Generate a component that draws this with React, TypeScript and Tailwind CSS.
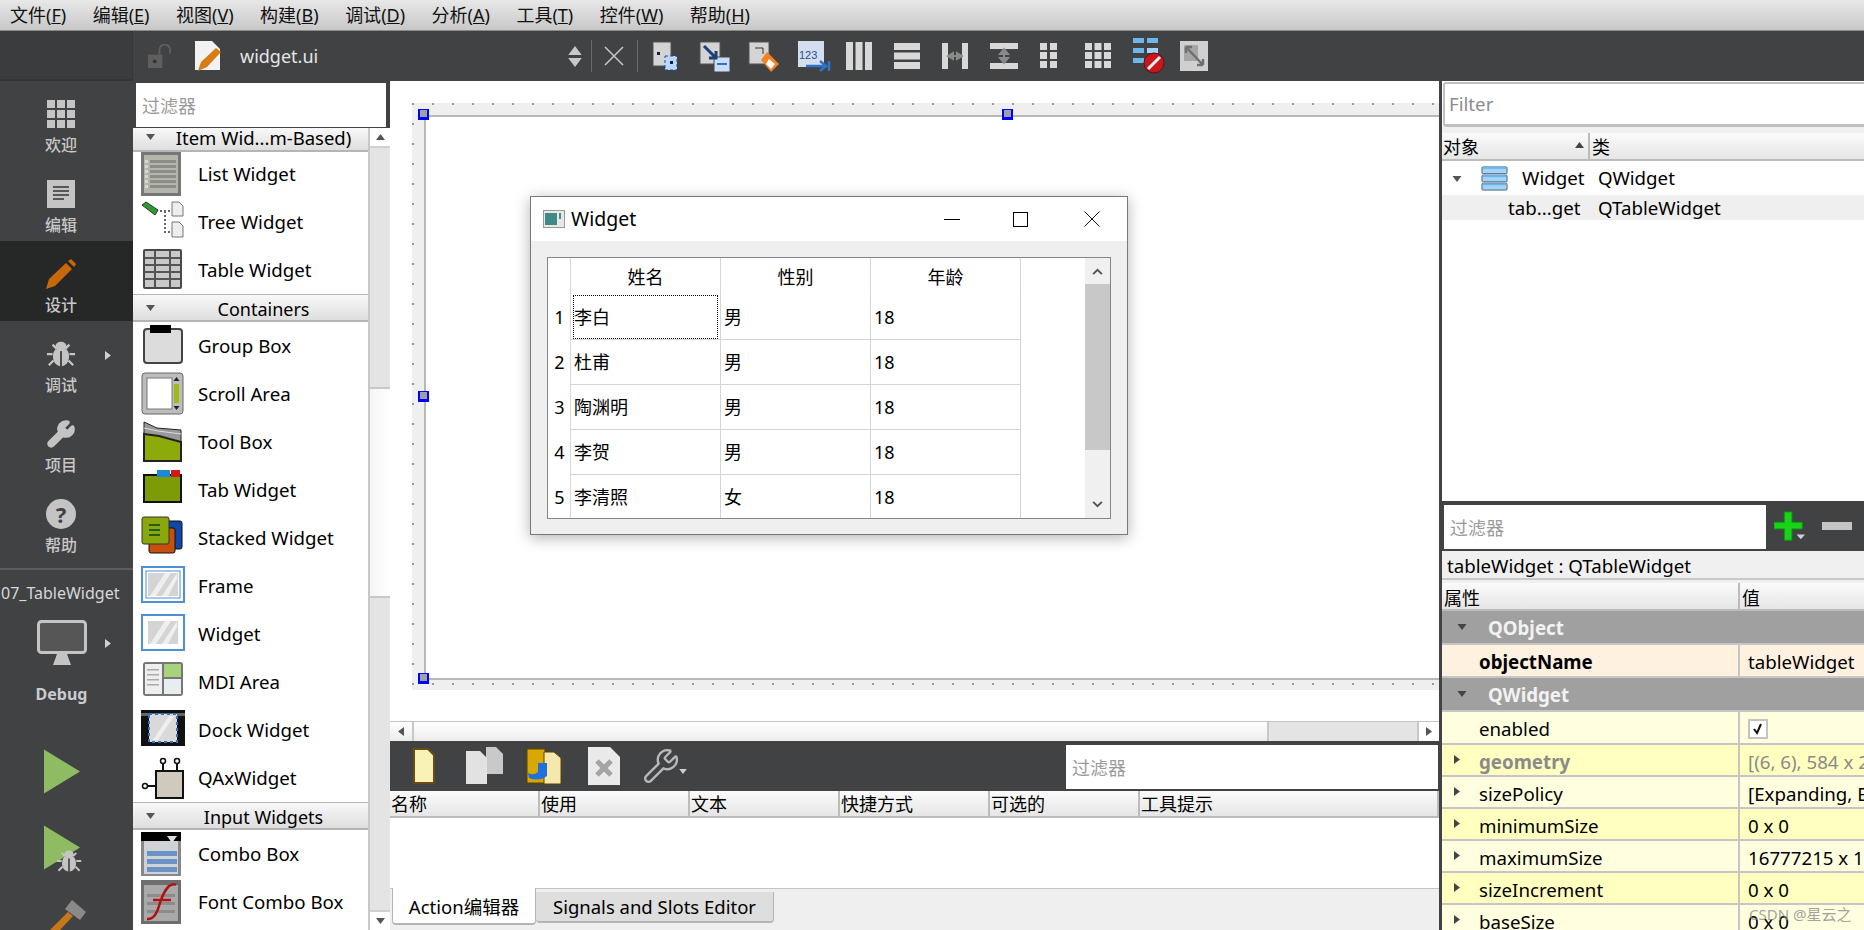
import React from 'react';
import { Wrench } from 'lucide-react';

// ---- little drawn icons ----

const Tri = ({ dir, className }: { dir: 'up' | 'down' | 'left' | 'right'; className?: string }) => {
  const pts = { up: '0,8 6,0 12,8', down: '0,0 12,0 6,8', left: '8,0 8,12 0,6', right: '0,0 8,6 0,12' }[dir];
  const box = dir === 'up' || dir === 'down' ? '0 0 12 8' : '0 0 8 12';
  return (
    <svg viewBox={box} className={className}>
      <polygon points={pts} fill="currentColor" />
    </svg>
  );
};

const Bug = ({ className }: { className?: string }) => (
  <svg viewBox="0 0 32 32" className={className}>
    <g stroke="#c4c4c4" strokeWidth="2.4" fill="none">
      <path d="M7 6l4 4M25 6l-4 4M1 16h6M31 16h-6M3 28l5-5M29 28l-5-5" />
    </g>
    <ellipse cx="16" cy="8" rx="6" ry="5" fill="#c4c4c4" />
    <path d="M15 11H10Q6 16 8 23Q10 28 15 29ZM17 11H22Q26 16 24 23Q22 28 17 29Z" fill="#c4c4c4" />
  </svg>
);

const Play = ({ className }: { className?: string }) => (
  <svg viewBox="0 0 36 44" className={className}>
    <polygon points="0,0 36,22 0,44" fill="#8fbc62" />
  </svg>
);

const ToolIcon = ({ kind }: { kind: number }) => {
  const c = '#d8d8d8';
  switch (kind) {
    case 0:
      return (
        <svg viewBox="0 0 36 32" className="w-[36px] h-[32px] blur-[0.4px]">
          <path d="M4 2h18v24H4z" fill="#d4d4d4" stroke="#555" />
          <path d="M16 16h12v14H16z" fill="#b9d7ff" stroke="#1f4e94" strokeDasharray="3 2" />
          <rect x="21" y="21" width="3" height="3" fill="#123" />
          <rect x="8" y="12" width="3" height="3" fill="#123" />
        </svg>
      );
    case 1:
      return (
        <svg viewBox="0 0 36 32" className="w-[36px] h-[32px] blur-[0.4px]">
          <path d="M2 2h20v22H2z" fill="#d4d4d4" stroke="#555" />
          <path d="M16 17h16v15H16z" fill="#c9deff" stroke="#444" />
          <path d="M19 24h10" stroke="#3b6fb4" strokeWidth="2" />
          <path d="M6 6l12 12M18 11v7h-7" stroke="#1d3f78" strokeWidth="3" fill="none" />
        </svg>
      );
    case 2:
      return (
        <svg viewBox="0 0 36 32" className="w-[36px] h-[32px] blur-[0.4px]">
          <path d="M2 2h20v22H2z" fill="#d4d4d4" stroke="#555" />
          <path d="M20 12l12 12-8 8-10-12z" fill="#f58220" />
          <path d="M22 19l6 5-4 5-5-5z" fill="#fff" />
          <path d="M8 8h8v6" stroke="#333" fill="none" />
        </svg>
      );
    case 3:
      return (
        <svg viewBox="0 0 36 32" className="w-[36px] h-[32px]">
          <path d="M2 1h26v26H2z" fill="#d4deef" />
          <text x="3" y="19" fontSize="11" fill="#24508f" fontFamily="Liberation Sans">123</text>
          <path d="M10 26h18M24 21l6 5-6 5M33 21v10" stroke="#2f73c9" strokeWidth="2.5" fill="none" />
        </svg>
      );
    case 4:
      return (
        <svg viewBox="0 0 28 32" className="w-[28px] h-[32px] blur-[0.4px]" fill={c}>
          <rect x="1" y="2" width="7" height="28" /><rect x="10.5" y="2" width="7" height="28" /><rect x="20" y="2" width="7" height="28" />
        </svg>
      );
    case 5:
      return (
        <svg viewBox="0 0 28 32" className="w-[28px] h-[32px] blur-[0.4px]" fill={c}>
          <rect x="1" y="3" width="26" height="7" /><rect x="1" y="12.5" width="26" height="7" /><rect x="1" y="22" width="26" height="7" />
        </svg>
      );
    case 6:
      return (
        <svg viewBox="0 0 28 32" className="w-[28px] h-[32px] blur-[0.4px]">
          <path d="M1 3h6v26H1zM21 3h6v26h-6z" fill={c} />
          <path d="M7 16h14M7 16l5-3v6zM21 16l-5-3v6z" stroke="#8a8a8a" strokeWidth="2" fill="#8a8a8a" />
        </svg>
      );
    case 7:
      return (
        <svg viewBox="0 0 30 32" className="w-[30px] h-[32px] blur-[0.4px]">
          <path d="M1 3h28v6H1zM1 23h28v6H1z" fill={c} />
          <path d="M15 9v14M15 9l-4 5h8zM15 23l-4-5h8z" stroke="#8a8a8a" strokeWidth="2" fill="#8a8a8a" />
        </svg>
      );
    case 8:
      return (
        <svg viewBox="0 0 20 32" className="w-[20px] h-[32px] blur-[0.4px]" fill={c}>
          {[3, 12, 21].map((y) => (
            <g key={y}><rect x="1" y={y} width="7" height="7" /><rect x="11" y={y} width="7" height="7" /></g>
          ))}
        </svg>
      );
    case 9:
      return (
        <svg viewBox="0 0 28 32" className="w-[28px] h-[32px] blur-[0.4px]" fill={c}>
          {[3, 12, 21].map((y) => (
            <g key={y}><rect x="1" y={y} width="7" height="7" /><rect x="10.5" y={y} width="7" height="7" /><rect x="20" y={y} width="7" height="7" /></g>
          ))}
        </svg>
      );
    case 10:
      return (
        <svg viewBox="0 0 34 38" className="w-[34px] h-[38px] blur-[0.4px]">
          <rect x="1" y="1" width="11" height="5" fill="#6fb6ee" /><rect x="15" y="1" width="11" height="5" fill="#6fb6ee" />
          <rect x="1" y="11" width="11" height="5" fill="#6fb6ee" /><rect x="15" y="11" width="11" height="5" fill="#a5d2f4" />
          <rect x="1" y="21" width="11" height="5" fill="#6fb6ee" />
          <circle cx="22" cy="26" r="10" fill="#c8161d" stroke="#6b0c10" />
          <path d="M16 32l12-12" stroke="#eee" strokeWidth="3" />
        </svg>
      );
    default:
      return (
        <svg viewBox="0 0 30 32" className="w-[30px] h-[32px] blur-[0.4px]">
          <rect x="1" y="1" width="28" height="30" fill="#d0d0d0" />
          <path d="M5 5h14v16H5z" fill="#a6a6a6" />
          <path d="M7 7l17 18M7 7v6M7 7h6M24 25v-6M24 25h-6" stroke="#707070" strokeWidth="2.5" fill="none" />
        </svg>
      );
  }
};

const BoxIcon = ({ name }: { name: string }) => {
  const cls = 'w-[44px] h-[44px] shrink-0 blur-[0.5px]';
  switch (name) {
    case 'List Widget':
      return (
        <svg viewBox="0 0 44 44" className={cls}>
          <rect x="0" y="0" width="40" height="44" fill="#777" />
          <rect x="3" y="3" width="34" height="38" fill="#b5b5ae" />
          {[8, 13, 18, 23, 28, 33].map((y) => <rect key={y} x="9" y={y} width="26" height="3" fill="#8d8d87" />)}
          {[8, 13, 18, 23, 28, 33].map((y) => <rect key={y} x="4" y={y} width="3" height="3" fill="#d8d8d2" />)}
        </svg>
      );
    case 'Tree Widget':
      return (
        <svg viewBox="0 0 44 44" className={cls}>
          <path d="M1 5l4-3 12 8-3 5z" fill="#2f9a2c" stroke="#333" />
          <path d="M19 11h10M24 11v21h6" stroke="#666" strokeWidth="2" strokeDasharray="2 2" fill="none" />
          <path d="M31 2h7l4 4v10H31zM31 22h7l4 4v11H31z" fill="#eee" stroke="#777" />
        </svg>
      );
    case 'Table Widget':
      return (
        <svg viewBox="0 0 44 44" className={cls}>
          <rect x="2" y="1" width="39" height="40" rx="2" fill="#4a4a4a" />
          <rect x="4" y="3" width="35" height="36" fill="#c9c9c9" />
          {[9, 16, 23, 30].map((y) => <rect key={y} x="4" y={y} width="35" height="2" fill="#555" />)}
          {[13, 28].map((x) => <rect key={x} x={x} y="3" width="2" height="36" fill="#555" />)}
        </svg>
      );
    case 'Group Box':
      return (
        <svg viewBox="0 0 44 44" className={cls}>
          <rect x="3" y="5" width="38" height="34" rx="3" fill="#dcdcdc" stroke="#444" strokeWidth="2" />
          <rect x="9" y="1" width="21" height="8" fill="#000" />
        </svg>
      );
    case 'Scroll Area':
      return (
        <svg viewBox="0 0 44 44" className={cls}>
          <rect x="1" y="1" width="41" height="41" rx="3" fill="#bdbdbd" stroke="#666" />
          <rect x="6" y="6" width="25" height="31" fill="#fff" stroke="#777" />
          <rect x="33" y="12" width="5" height="19" fill="#9dbb12" />
          <path d="M35.500 5l3 4h-6zM35.500 38l3-4h-6z" fill="#222" />
        </svg>
      );
    case 'Tool Box':
      return (
        <svg viewBox="0 0 44 44" className={cls}>
          <path d="M3 2l13 6 24 2v31H3z" fill="#999" stroke="#222" />
          <path d="M3 14l15 2 22 6v19H3z" fill="#8cab0b" stroke="#222" strokeWidth="2" />
          <path d="M3 8l14 3 23 3" stroke="#ddd" fill="none" />
        </svg>
      );
    case 'Tab Widget':
      return (
        <svg viewBox="0 0 44 44" className={cls}>
          <rect x="3" y="3" width="37" height="27" transform="translate(0 4)" fill="#7d9b06" stroke="#111" strokeWidth="2" />
          <rect x="16" y="2" width="13" height="7" fill="#1b88d8" />
          <rect x="30" y="2" width="9" height="7" fill="#d81818" />
        </svg>
      );
    case 'Stacked Widget':
      return (
        <svg viewBox="0 0 44 44" className={cls}>
          <rect x="24" y="5" width="17" height="28" rx="2" fill="#0f46a8" stroke="#111" />
          <rect x="8" y="12" width="26" height="25" rx="2" fill="#c7500c" stroke="#111" />
          <rect x="1" y="1" width="27" height="27" rx="2" fill="#8aa80e" stroke="#333" />
          {[8, 13, 18].map((y) => <rect key={y} x="8" y={y} width="11" height="2" fill="#245c08" />)}
        </svg>
      );
    case 'Frame':
    case 'Widget':
      return (
        <svg viewBox="0 0 44 44" className={cls}>
          <rect x="1" y="3" width="42" height="35" fill="#fff" stroke="#4f8fd6" strokeWidth="2" />
          {name === 'Frame' && <rect x="5" y="7" width="34" height="27" fill="#fff" stroke="#4f8fd6" />}
          <rect x="7" y="9" width="30" height="23" fill="#d4d4d4" />
          <path d="M9 32L24 9h6L15 32zM21 32L36 9v6L27 32z" fill="#efefef" />
        </svg>
      );
    case 'MDI Area':
      return (
        <svg viewBox="0 0 44 44" className={cls}>
          <rect x="2" y="2" width="40" height="34" rx="3" fill="#777" />
          <rect x="4" y="4" width="17" height="30" fill="#eee" />
          <rect x="23" y="4" width="17" height="13" fill="#a8d27c" />
          <rect x="23" y="19" width="17" height="15" fill="#e8eef0" />
          {[9, 14, 19, 24].map((y) => <rect key={y} x="6" y={y} width="12" height="1.500" fill="#aaa" />)}
        </svg>
      );
    case 'Dock Widget':
      return (
        <svg viewBox="0 0 44 44" className={cls}>
          <rect x="0" y="2" width="44" height="36" fill="#111" />
          <rect x="0" y="5" width="44" height="3" fill="#666" />
          <rect x="8" y="6" width="28" height="28" fill="#d9d9d9" stroke="#2f73c9" strokeWidth="2" strokeDasharray="3 3" />
          <path d="M12 32L28 8h5L17 32z" fill="#efefef" />
        </svg>
      );
    case 'QAxWidget':
      return (
        <svg viewBox="0 0 44 44" className={cls}>
          <rect x="15" y="15" width="27" height="27" fill="#cfc9be" stroke="#111" strokeWidth="2" />
          <path d="M22 15V7M36 15V7M15 30H7" stroke="#111" strokeWidth="2" />
          <circle cx="22" cy="5" r="2.500" fill="#fff" stroke="#111" strokeWidth="1.500" />
          <circle cx="36" cy="5" r="2.500" fill="#fff" stroke="#111" strokeWidth="1.500" />
          <circle cx="4" cy="30" r="2.500" fill="#fff" stroke="#111" strokeWidth="1.500" />
        </svg>
      );
    case 'Combo Box':
      return (
        <svg viewBox="0 0 44 44" className={cls}>
          <rect x="0" y="0" width="40" height="44" fill="#888" />
          <rect x="0" y="0" width="40" height="9" fill="#000" />
          <rect x="3" y="9" width="34" height="33" fill="#cfd3d8" />
          <polygon points="26,4 36,4 31,11" fill="#ddd" />
          {[19, 27, 35].map((y) => <rect key={y} x="6" y={y} width="30" height="5" fill="#6a92c5" />)}
        </svg>
      );
    default:
      return (
        <svg viewBox="0 0 44 44" className={cls}>
          <rect x="0" y="0" width="40" height="44" fill="#6e6e6e" />
          <rect x="3" y="5" width="34" height="36" fill="#a9a9a9" />
          {[14, 22, 30].map((y) => <rect key={y} x="6" y={y} width="28" height="3" fill="#8c8c8c" />)}
          <path d="M6 39Q14 40 18 26T28 6Q33 3 35 5M12 20H30" stroke="#b01212" strokeWidth="2.500" fill="none" />
        </svg>
      );
  }
};

// ---- sidebar ----

const Mode = ({ label, active, icon, arrow }: { label: string; active?: boolean; icon: React.ReactNode; arrow?: boolean }) => (
  <div className={`relative h-[80px] flex flex-col items-center pt-[17px] pr-[11px] ${active ? 'bg-[#262727]' : ''}`}>
    <div className="h-[32px] flex items-center justify-center">{icon}</div>
    <div className="mt-[4px] text-[16px] leading-[22px] font-medium text-[#c8c8c8]">{label}</div>
    {arrow && <Tri dir="right" className="absolute left-[105px] top-[29px] w-[6px] h-[11px] text-[#d0d0d0]" />}
  </div>
);

const Sidebar = () => (
  <div className="w-[133px] shrink-0 bg-[#404244] flex flex-col">
    <Mode
      label="欢迎"
      icon={
        <svg viewBox="0 0 28 28" className="w-[28px] h-[28px]" fill="#c4c4c4">
          {[0, 10, 20].map((y) => [0, 10, 20].map((x) => <rect key={`${x}-${y}`} x={x} y={y} width="8" height="8" />))}
        </svg>
      }
    />
    <Mode
      label="编辑"
      icon={
        <svg viewBox="0 0 28 28" className="w-[28px] h-[28px]">
          <rect width="28" height="28" fill="#c4c4c4" />
          <path d="M6 7h16M6 11h16M6 15h16M6 19h11" stroke="#333" strokeWidth="1.500" />
        </svg>
      }
    />
    <Mode
      active
      label="设计"
      icon={
        <svg viewBox="0 0 30 30" className="w-[30px] h-[30px]">
          <path d="M0 30l3-10L20 4l6 6L9 27z" fill="#c8680a" />
          <path d="M22 2l3-2 5 5-2 3z" fill="#c8680a" />
        </svg>
      }
    />
    <Mode label="调试" arrow icon={<Bug className="w-[30px] h-[30px]" />} />
    <Mode label="项目" icon={<Wrench className="w-[30px] h-[30px] text-[#c4c4c4] fill-[#c4c4c4]" />} />
    <Mode
      label="帮助"
      icon={
        <div className="w-[30px] h-[30px] rounded-full bg-[#c4c4c4] flex items-center justify-center text-[22px] font-bold text-[#404244]">?</div>
      }
    />
    <div className="mt-[7px] h-[2px] bg-[#5a5c5e]" />
    <div className="mt-[12px] text-[16px] leading-[22px] text-[#d8d8d8] whitespace-nowrap pl-[1px]">07_TableWidget</div>
    <div className="relative mt-[16px] flex flex-col items-center pr-[10px]">
      <svg viewBox="0 0 50 50" className="w-[50px] h-[50px]">
        <rect x="1.500" y="1.500" width="47" height="31" rx="3" fill="#565656" stroke="#c4c4c4" strokeWidth="3" />
        <path d="M20 34h10l4 11H16z" fill="#c4c4c4" />
      </svg>
      <Tri dir="right" className="absolute left-[105px] top-[18px] w-[6px] h-[11px] text-[#d0d0d0]" />
      <div className="mt-[13px] text-[16px] leading-[22px] font-bold text-[#c8ccd0]">Debug</div>
    </div>
    <div className="mt-[44px] pl-[44px]">
      <Play className="w-[36px] h-[45px]" />
    </div>
    <div className="relative mt-[31px] pl-[44px]">
      <Play className="w-[36px] h-[45px]" />
      <Bug className="absolute left-[56px] top-[23px] w-[26px] h-[26px]" />
    </div>
    <div className="mt-[30px] pl-[50px]">
      <svg viewBox="0 0 36 30" className="w-[36px] h-[30px]">
        <path d="M22 0l14 12-6 8-15-11z" fill="#8a8a8a" />
        <path d="M0 30l18-18 5 4L10 30z" fill="#c8761a" />
      </svg>
    </div>
  </div>
);

// ---- widget box ----

const Section = ({ label }: { label: string }) => (
  <div className="relative shrink-0 h-[28px] flex items-center justify-center pl-[26px] pt-[3px] text-[18px] leading-[22px] bg-gradient-to-b from-[#f8f8f8] to-[#dedede] border-t border-t-[#b5b5b5] border-b-[2px] border-b-[#b5b5b5]">
    <Tri dir="down" className="absolute left-[12px] top-[10px] w-[11px] h-[6px] text-[#555]" />
    <span>{label}</span>
  </div>
);

const ToolRow = ({ name }: { name: string }) => (
  <div className="h-[48px] shrink-0 flex items-center pl-[8px] text-[18.7px] text-black">
    <BoxIcon name={name} />
    <span className="ml-[13px] whitespace-nowrap">{name}</span>
  </div>
);

const WidgetBox = () => (
  <div className="w-[257px] shrink-0 flex flex-col bg-[#404244] pt-[2px]">
    <div className="ml-[3px] mr-[4px] h-[44px] shrink-0 bg-white flex items-center pl-[6px] pt-[3px] text-[18px] text-[#9a9a9a]">过滤器</div>
    <div className="mt-[1px] flex-1 bg-white flex min-h-0">
      <div className="flex-1 flex flex-col overflow-hidden">
        <div className="relative shrink-0 h-[24px] -mb-[2px] flex items-start justify-center pl-[26px] text-[18.5px] leading-[20px] bg-gradient-to-b from-[#f8f8f8] to-[#dedede] border-b-[2px] border-[#b5b5b5]">
          <Tri dir="down" className="absolute left-[12px] top-[6px] w-[11px] h-[6px] text-[#555]" />
          <span>Item Wid...m-Based)</span>
        </div>
        <ToolRow name="List Widget" />
        <ToolRow name="Tree Widget" />
        <ToolRow name="Table Widget" />
        <Section label="Containers" />
        {['Group Box', 'Scroll Area', 'Tool Box', 'Tab Widget', 'Stacked Widget', 'Frame', 'Widget', 'MDI Area', 'Dock Widget', 'QAxWidget'].map((n) => (
          <ToolRow key={n} name={n} />
        ))}
        <Section label="Input Widgets" />
        <ToolRow name="Combo Box" />
        <ToolRow name="Font Combo Box" />
      </div>
      <div className="w-[22px] shrink-0 flex flex-col border-l-[2px] border-[#c8c8c8]">
        <div className="h-[20px] shrink-0 flex items-center justify-center bg-white border-b-[2px] border-[#d0d0d0]">
          <Tri dir="up" className="w-[11px] h-[6px] text-[#555]" />
        </div>
        <div className="h-[241px] shrink-0 bg-[#e4e4e4] border-b-[2px] border-[#c8c8c8]" />
        <div className="h-[209px] shrink-0 bg-gradient-to-r from-[#f5f5f5] to-white border-b-[2px] border-[#c8c8c8]" />
        <div className="flex-1 bg-[#e4e4e4]" />
        <div className="h-[20px] shrink-0 flex items-center justify-center bg-white border-t-[2px] border-[#d0d0d0]">
          <Tri dir="down" className="w-[11px] h-[6px] text-[#555]" />
        </div>
      </div>
    </div>
  </div>
);

// ---- form with the running preview window ----

const Handle = ({ className }: { className: string }) => (
  <div className={`absolute w-[11px] h-[11px] bg-[#a0a0a0] border-l-[2px] border-r-[2px] border-t-[1px] border-b-[3px] border-[#0000ff] ${className}`} />
);

const rows = [
  ['李白', '男'],
  ['杜甫', '男'],
  ['陶渊明', '男'],
  ['李贺', '男'],
  ['李清照', '女'],
];

const PreviewWindow = () => (
  <div className="absolute left-[140px] top-[115px] w-[598px] h-[339px] flex flex-col bg-[#efefef] border border-[#77797b] shadow-[0_3px_14px_rgba(0,0,0,0.3)]">
    <div className="h-[44px] shrink-0 bg-white flex items-center text-[19.5px]">
      <svg viewBox="0 0 22 18" className="ml-[12px] w-[22px] h-[18px]">
        <rect x="0.500" y="0.500" width="21" height="17" fill="#e8e8e8" stroke="#999" />
        <rect x="2" y="3" width="12" height="12" fill="#3d8a86" />
        <rect x="16" y="3" width="2" height="6" fill="#4a8a80" />
      </svg>
      <span className="ml-[6px]">Widget</span>
      <div className="ml-auto w-[16px] h-[1px] bg-black mr-[53px]" />
      <div className="w-[15px] h-[15px] border border-black mr-[56px]" />
      <svg viewBox="0 0 16 16" className="w-[16px] h-[16px] mr-[27px]">
        <path d="M0.500 0.500l15 15M15.500 0.500l-15 15" stroke="#111" />
      </svg>
    </div>
    <div className="mx-[16px] mt-[16px] h-[262px] bg-white border border-[#82868c] flex overflow-hidden">
      <div className="flex-1 min-w-0 flex flex-col">
        <div className="h-[37px] shrink-0 flex text-[18px]">
          <div className="w-[23px] shrink-0 border-r border-[#d8d8d8]" />
          {['姓名', '性别', '年龄'].map((h) => (
            <div key={h} className="w-[150px] shrink-0 flex items-center justify-center pt-[2px] border-r border-[#d8d8d8]">{h}</div>
          ))}
        </div>
        {rows.map(([name, sex], i) => (
          <div key={name} className="h-[45px] shrink-0 flex text-[18px]">
            <div className="w-[23px] shrink-0 flex items-center justify-center border-r border-[#d8d8d8] pl-[1px]">{i + 1}</div>
            <div className="w-[150px] shrink-0 flex items-center px-[2px] border-r border-b border-[#d4d4d4]">
              <div className={`w-full h-full flex items-center pl-[1px] ${i === 0 ? 'outline-dotted outline-1 -outline-offset-1 outline-black' : ''}`}>{name}</div>
            </div>
            <div className="w-[150px] shrink-0 flex items-center pl-[3px] border-r border-b border-[#d4d4d4]">{sex}</div>
            <div className="w-[150px] shrink-0 flex items-center pl-[3px] border-r border-b border-[#d4d4d4]">18</div>
          </div>
        ))}
      </div>
      <div className="w-[25px] shrink-0 flex flex-col bg-[#f0f0f0]">
        <div className="h-[26px] shrink-0 flex items-center justify-center">
          <svg viewBox="0 0 12 8" className="w-[11px] h-[7px]"><path d="M1 7l5-5 5 5" stroke="#555" strokeWidth="2.200" fill="none" /></svg>
        </div>
        <div className="h-[166px] shrink-0 bg-[#c8c8c8]" />
        <div className="flex-1 flex items-end justify-center pb-[10px]">
          <svg viewBox="0 0 12 8" className="w-[11px] h-[7px]"><path d="M1 1l5 5 5-5" stroke="#555" strokeWidth="2.200" fill="none" /></svg>
        </div>
      </div>
    </div>
  </div>
);

const FormCanvas = () => (
  <div className="relative flex-1 min-h-0 bg-white pt-[22px] pl-[22px] overflow-hidden">
    <div className="h-[587px] bg-[#efefef] bg-[image:radial-gradient(circle_at_1px_1px,#999_1px,transparent_1px)] bg-[size:20px_20px] pl-[12px] pt-[12px] pb-[10px]">
      <div className="h-full bg-white border-l-[2px] border-t-[2px] border-b-[2px] border-[#b8b8b8]" />
    </div>
    <Handle className="left-[28px] top-[28px]" />
    <Handle className="left-[612px] top-[28px]" />
    <Handle className="left-[28px] top-[310px]" />
    <Handle className="left-[28px] top-[592px]" />
    <PreviewWindow />
  </div>
);

// ---- action editor ----

const HeaderCell = ({ label, className }: { label: string; className?: string }) => (
  <div className={`h-full flex items-center pl-[1px] pt-[2px] border-r-[2px] border-b-[2px] border-[#bcbcbc] ${className ?? ''}`}>{label}</div>
);

const ActionEditor = () => (
  <div className="h-[189px] shrink-0 flex flex-col bg-white">
    <div className="h-[50px] shrink-0 bg-[#404244] flex items-center relative">
      <svg viewBox="0 0 24 38" className="absolute left-[22px] top-[6px] w-[24px] h-[38px] blur-[0.4px]">
        <path d="M2 2h14l6 6v28H2z" fill="#f8f2b6" stroke="#6b4b12" strokeWidth="2" />
      </svg>
      <svg viewBox="0 0 40 40" className="absolute left-[74px] top-[5px] w-[40px] h-[40px] blur-[0.4px]">
        <path d="M22 1h10l7 7v20H22z" fill="#c9c9c9" />
        <path d="M2 5h14l7 7v26H2z" fill="#e2e2e2" />
      </svg>
      <svg viewBox="0 0 36 40" className="absolute left-[136px] top-[5px] w-[36px] h-[40px] blur-[0.4px]">
        <rect x="1" y="3" width="18" height="34" fill="#d8a800" stroke="#5a4300" />
        <path d="M18 6h10l7 6v26H18z" fill="#f6e7ad" stroke="#5a4300" />
        <path d="M2 27q6 3 10-1V17h9v13q-8 6-18 2z" fill="#1e6fe0" />
      </svg>
      <svg viewBox="0 0 32 38" className="absolute left-[198px] top-[6px] w-[32px] h-[38px] blur-[0.4px]">
        <path d="M0 0h22l10 10v28H0z" fill="#eaeaea" />
        <path d="M9 14l14 14M23 14L9 28" stroke="#a4a4a4" strokeWidth="5" />
      </svg>
      <Wrench className="absolute left-[252px] top-[6px] w-[38px] h-[38px] text-[#b8b8b8]" strokeWidth={1.500} />
      <Tri dir="down" className="absolute left-[288px] top-[28px] w-[10px] h-[5px] text-[#d0d0d0]" />
      <div className="absolute left-[676px] top-[4px] w-[372px] h-[44px] bg-white flex items-center pl-[6px] pt-[3px] text-[18px] text-[#9a9a9a]">过滤器</div>
    </div>
    <div className="h-[27px] shrink-0 flex text-[18px] bg-gradient-to-b from-[#fbfbfb] to-[#e4e4e4]">
      <HeaderCell label="名称" className="w-[150px]" />
      <HeaderCell label="使用" className="w-[150px]" />
      <HeaderCell label="文本" className="w-[150px]" />
      <HeaderCell label="快捷方式" className="w-[150px]" />
      <HeaderCell label="可选的" className="w-[150px]" />
      <HeaderCell label="工具提示" className="flex-1" />
    </div>
    <div className="h-[71px] shrink-0 border-b-[1px] border-[#c4c4c4]" />
    <div className="flex-1 bg-[#efefef] flex items-start pl-[2px] text-[18.5px]">
      <div className="w-[144px] h-[37px] bg-white -mt-[1px] pt-[2px] border border-t-0 border-[#b5b5b5] border-b-[2px] rounded-b-[4px] flex items-center justify-center">Action编辑器</div>
      <div className="w-[238px] h-[31px] mt-[3px] bg-[#dedede] border-r border-b-[2px] border-[#b5b5b5] rounded-b-[4px] flex items-center justify-center">Signals and Slots Editor</div>
    </div>
  </div>
);

// ---- object + property inspector ----

const HBar = () => (
  <div className="h-[20px] shrink-0 flex bg-gradient-to-b from-[#ffffff] to-[#ececec] border-t border-[#c4c4c4]">
    <div className="w-[22px] shrink-0 flex items-center justify-center">
      <Tri dir="left" className="w-[6px] h-[11px] text-[#555]" />
    </div>
    <div className="w-[2px] shrink-0 bg-[#c8c8c8]" />
    <div className="w-[853px] shrink-0" />
    <div className="w-[2px] shrink-0 bg-[#c8c8c8]" />
    <div className="flex-1 bg-[#e4e4e4]" />
    <div className="w-[2px] shrink-0 bg-[#c8c8c8]" />
    <div className="w-[20px] shrink-0 flex items-center justify-center bg-white">
      <Tri dir="right" className="w-[6px] h-[11px] text-[#555]" />
    </div>
  </div>
);

const PropRow = ({ name, value, tone, bold, gray, arrow, check, tall }: { name: string; value?: string; tone: string; bold?: boolean; gray?: boolean; arrow?: boolean; check?: boolean; tall?: boolean }) => (
  <div className={`${tall ? 'h-[33px]' : 'h-[32px]'} shrink-0 flex border-b-[2px] border-[#c6c6c6] text-[18.7px] leading-[24px] ${tone} ${gray ? 'text-[#8a8a8a]' : 'text-black'}`}>
    <div className="relative w-[298px] shrink-0 flex items-center pl-[37px] pt-[3px] border-r-[2px] border-[#c6c6c6]">
      {arrow && <Tri dir="right" className="absolute left-[12px] top-[9px] w-[6px] h-[11px] text-[#444]" />}
      <span className={bold ? 'font-bold' : ''}>{name}</span>
    </div>
    <div className="flex-1 flex items-center pl-[8px] pt-[3px] whitespace-nowrap overflow-hidden">
      {check ? (
        <div className="w-[20px] h-[20px] bg-white border-[2px] border-[#c4c4c4] flex items-center justify-center">
          <svg viewBox="0 0 12 12" className="w-[12px] h-[12px]"><path d="M2 6l3 4 4-9" stroke="#111" strokeWidth="2" fill="none" /></svg>
        </div>
      ) : value}
    </div>
  </div>
);

const GroupRow = ({ label }: { label: string }) => (
  <div className="relative h-[34px] shrink-0 bg-[#a0a0a0] border-b-[2px] border-[#c6c6c6] flex items-center pl-[46px] pt-[2px] text-[18.7px] font-bold text-[#f2f2f2]">
    <Tri dir="down" className="absolute left-[14px] top-[13px] w-[12px] h-[6px] text-[#444]" />
    {label}
  </div>
);

const Inspector = () => (
  <div className="flex-1 min-w-0 flex flex-col border-l-[2px] border-[#404244] bg-white">
    <div className="h-[420px] shrink-0 flex flex-col overflow-hidden">
      <div className="h-[45px] shrink-0 border-[2px] border-r-0 border-[#c0c0c0] border-b-[3px] rounded-l-[3px] mt-[1px] ml-[1px] flex items-center pl-[4px] text-[18.7px] text-[#8c8c8c]">Filter</div>
      <div className="h-[6px] shrink-0 bg-[#f0f0f0]" />
      <div className="h-[28px] shrink-0 flex text-[18px] bg-gradient-to-b from-[#fbfbfb] to-[#e4e4e4]">
        <div className="relative w-[148px] shrink-0 flex items-center pl-[1px] pt-[2px] border-r-[2px] border-b-[2px] border-[#bcbcbc]">
          对象
          <Tri dir="up" className="absolute right-[3px] top-[9px] w-[11px] h-[6px] text-[#444]" />
        </div>
        <div className="flex-1 flex items-center pl-[2px] pt-[2px] border-b-[2px] border-[#bcbcbc]">类</div>
      </div>
      <div className="h-[34px] shrink-0 flex items-center text-[18.7px] pt-[1px]">
        <Tri dir="down" className="ml-[9px] w-[12px] h-[6px] text-[#555]" />
        <svg viewBox="0 0 28 28" className="ml-[18px] w-[27px] h-[27px]">
          {[2, 10.500, 19].map((y) => (
            <g key={y}>
              <rect x="1" y={y} width="26" height="7" rx="1" fill="#a4d4f8" stroke="#4b5f78" />
              <rect x="2" y={y} width="24" height="2" fill="#6bb4ec" />
            </g>
          ))}
        </svg>
        <span className="ml-[14px] w-[76px] shrink-0">Widget</span>
        <span>QWidget</span>
      </div>
      <div className="h-[25px] shrink-0 bg-[#efefef] flex items-center text-[18.7px] leading-[24px] pt-[1px]">
        <span className="ml-[66px] w-[90px] shrink-0">tab...get</span>
        <span>QTableWidget</span>
      </div>
    </div>
    <div className="flex-1 min-h-0 flex flex-col overflow-hidden">
      <div className="h-[50px] shrink-0 bg-[#404244] flex items-start pt-[4px]">
        <div className="ml-[2px] w-[322px] h-[44px] bg-white flex items-center pl-[6px] pt-[2px] text-[18px] text-[#9a9a9a]">过滤器</div>
        <svg viewBox="0 0 34 34" className="ml-[8px] mt-[6px] w-[32px] h-[32px]">
          <path d="M11 1h8v11h11v7H19v12h-8V19H0v-7h11z" fill="#18d418" stroke="#0c9c0c" />
          <polygon points="24,25 33,25 28.500,30" fill="#d0d0d0" />
        </svg>
        <div className="ml-[16px] mt-[17px] w-[30px] h-[8px] bg-[#c4c4c4]" />
      </div>
      <div className="h-[29px] shrink-0 bg-[#f0f0f0] border-b-[2px] border-[#c8c8c8] flex items-center pl-[5px] pt-[3px] text-[18.7px] leading-[24px]">tableWidget : QTableWidget</div>
      <div className="h-[3px] shrink-0 bg-[#f0f0f0]" />
      <div className="h-[28px] shrink-0 flex text-[18px] leading-[24px] bg-gradient-to-b from-[#fbfbfb] to-[#e4e4e4]">
        <div className="w-[298px] shrink-0 flex items-center pl-[2px] pt-[3px] border-r-[2px] border-b-[2px] border-[#bcbcbc]">属性</div>
        <div className="flex-1 flex items-center pl-[2px] pt-[3px] border-b-[2px] border-[#bcbcbc]">值</div>
      </div>
      <GroupRow label="QObject" />
      <PropRow name="objectName" value="tableWidget" tone="bg-[#fff1e0]" bold tall />
      <GroupRow label="QWidget" />
      <PropRow name="enabled" tone="bg-[#ffffe0]" check tall />
      <PropRow name="geometry" value="[(6, 6), 584 x 2" tone="bg-[#ffffc0]" bold gray arrow />
      <PropRow name="sizePolicy" value="[Expanding, E" tone="bg-[#ffffe0]" arrow />
      <PropRow name="minimumSize" value="0 x 0" tone="bg-[#ffffc0]" arrow />
      <PropRow name="maximumSize" value="16777215 x 1" tone="bg-[#ffffe0]" arrow />
      <PropRow name="sizeIncrement" value="0 x 0" tone="bg-[#ffffc0]" arrow />
      <PropRow name="baseSize" value="0 x 0" tone="bg-[#ffffe0]" arrow />
    </div>
  </div>
);

const menus: [string, string][] = [
  ['文件', 'F'],
  ['编辑', 'E'],
  ['视图', 'V'],
  ['构建', 'B'],
  ['调试', 'D'],
  ['分析', 'A'],
  ['工具', 'T'],
  ['控件', 'W'],
  ['帮助', 'H'],
];

export default function App() {
  return (
    <div className="relative w-[1864px] h-[930px] overflow-hidden flex flex-col bg-[#404244] text-black font-['Noto_Sans','Noto_Sans_CJK_SC',sans-serif]">
      {/* menu bar */}
      <div className="h-[31px] shrink-0 flex items-center pl-[10px] gap-[26.5px] text-[18px] text-[#111] bg-gradient-to-b from-[#e8e8e8] to-[#c8c8c8] border-b border-[#8a8a8a]">
        {menus.map(([t, k]) => (
          <span key={k} className="whitespace-nowrap">
            {t}(<span className="underline">{k}</span>)
          </span>
        ))}
      </div>

      {/* editor toolbar */}
      <div className="h-[50px] shrink-0 flex items-center bg-[#404244]">
        <div className="w-[133px] h-full shrink-0 bg-[#3a3c3e] border-b-[2px] border-[#333537] border-r-[1px]" />
        <svg viewBox="0 0 26 26" className="ml-[14px] w-[25px] h-[25px]">
          <rect x="1" y="11" width="15" height="14" fill="#5e5e5e" />
          <circle cx="8" cy="18" r="2" fill="#333" />
          <path d="M13 11V6a5 5 0 0 1 11 0v4" stroke="#5e5e5e" strokeWidth="2" fill="none" />
        </svg>
        <svg viewBox="0 0 28 32" className="ml-[22px] w-[28px] h-[32px]">
          <path d="M1 1h17l8 8v21H1z" fill="#f2f2f2" />
          <path d="M4 31l3-9L22 8l5 4-14 15z" fill="#d87a16" />
        </svg>
        <span className="ml-[18px] w-[328px] text-[18px] text-[#e6e6e6]">widget.ui</span>
        <div className="flex flex-col gap-[3px]">
          <Tri dir="up" className="w-[14px] h-[9px] text-[#c8c8c8]" />
          <Tri dir="down" className="w-[14px] h-[9px] text-[#c8c8c8]" />
        </div>
        <div className="ml-[9px] w-[1px] h-[32px] bg-[#6a6a6a]" />
        <svg viewBox="0 0 20 20" className="ml-[12px] w-[20px] h-[20px]">
          <path d="M1 1l18 18M19 1L1 19" stroke="#c8c8c8" strokeWidth="1.500" />
        </svg>
        <div className="ml-[13px] w-[1px] h-[32px] bg-[#6a6a6a]" />
        <div className="ml-[11px] flex items-center gap-[13px]">
          {[0, 1, 2, 3].map((k) => <ToolIcon key={k} kind={k} />)}
          <div className="flex items-center gap-[20px]">
            {[4, 5, 6, 7, 8].map((k) => <ToolIcon key={k} kind={k} />)}
            <div className="ml-[5px]"><ToolIcon kind={9} /></div>
            <ToolIcon kind={10} />
            <div className="-ml-[7px]"><ToolIcon kind={11} /></div>
          </div>
        </div>
      </div>

      {/* main area */}
      <div className="flex-1 min-h-0 flex">
        <Sidebar />
        <WidgetBox />
        <div className="w-[1050px] shrink-0 flex flex-col border-r-[1px] border-[#404244]">
          <FormCanvas />
          <HBar />
          <ActionEditor />
        </div>
        <Inspector />
      </div>

      <div className="absolute left-[1749px] top-[903px] text-[15px] text-[#8a8a8a]/80 whitespace-nowrap">CSDN @星云之</div>
    </div>
  );
}
